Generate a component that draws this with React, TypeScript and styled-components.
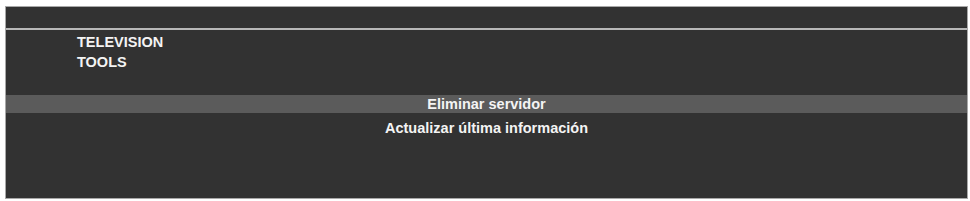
import React from 'react';
import styled, {createGlobalStyle} from 'styled-components';

const GlobalStyle = createGlobalStyle`
  html, body {
    margin: 0;
    padding: 0;
    background: #ffffff;
  }
  body {
    font-family: "Liberation Sans", Arial, Helvetica, sans-serif;
  }
`;

const Panel = styled.div`
  margin: 6px 2px 0 5px;
  height: 193px;
  box-sizing: border-box;
  background: #323232;
  border: 1px solid #a8a8a8;
  display: flex;
  flex-direction: column;
`;

const Header = styled.div`
  height: 21px;
  border-bottom: 2px solid #b8b8b8;
`;

const NavList = styled.ul`
  list-style: none;
  margin: 0;
  padding: 2px 0 0 71px;
  height: 65px;
  box-sizing: border-box;
`;

const NavItem = styled.li`
  color: #f4f4f4;
  font-size: 14.5px;
  font-weight: bold;
  line-height: 20px;
`;

const ActionList = styled.div`
  display: flex;
  flex-direction: column;
  gap: 6px;
`;

const Action = styled.div<{ active?: boolean }>`
  height: 18px;
  line-height: 18px;
  text-align: center;
  font-size: 14.5px;
  font-weight: bold;
  color: #f4f4f4;
  background: ${p => (p.active ? '#5b5b5b' : 'transparent')};
`;

const menu = ['TELEVISION', 'TOOLS'];
const actions = ['Eliminar servidor', 'Actualizar última información'];

export default function App() {
    return (
        <>
            <GlobalStyle/>
            <Panel>
                <Header/>
                <NavList>
                    {menu.map(m => <NavItem key={m}>{m}</NavItem>)}
                </NavList>
                <ActionList>
                    {actions.map((a, i) => (
                        <Action key={a} active={i === 0}>{a}</Action>
                    ))}
                </ActionList>
            </Panel>
        </>
    );
}
